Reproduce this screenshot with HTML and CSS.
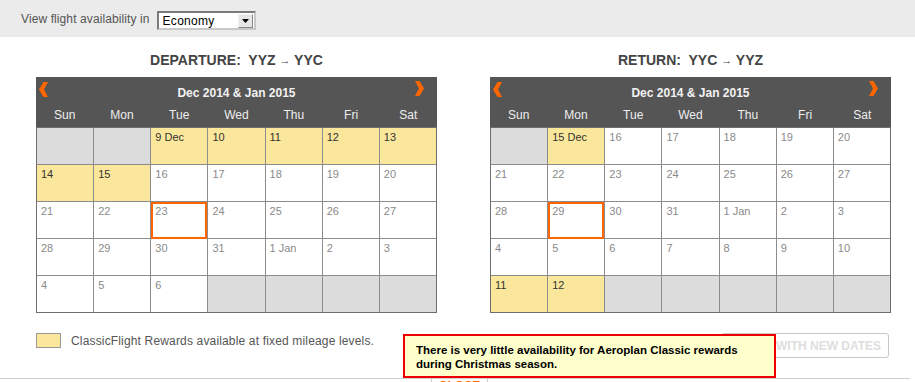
FILE: index.html
```html
<!DOCTYPE html>
<html lang="en">
<head>
    <meta charset="UTF-8">
    <title>Flight availability</title>
    <link rel="stylesheet" href="styles.css">
</head>
<body>
    <div class="toolbar">
        <span class="toolbar-label">View flight availability in</span>
        <div class="select">
            <span>Economy</span>
            <span class="select-btn"><svg width="7" height="4" viewBox="0 0 7 4"><polygon points="0,0 7,0 3.5,4" fill="#000"/></svg></span>
        </div>
    </div>

    <div class="calendars">
        <div class="cal-block">
            <h2>DEPARTURE:&nbsp; YYZ <span class="arr">&#8594;</span> YYC</h2>
            <div class="cal">
                <div class="cal-head">
                    <svg class="nav nav-prev" width="9" height="15" viewBox="0 0 9 15"><polygon points="9,0 5,7.5 9,15 4.5,15 0,7.5 4.5,0" fill="#ff6600"/></svg>
                    <svg class="nav nav-next" width="9" height="15" viewBox="0 0 9 15"><polygon points="0,0 4,7.5 0,15 4.5,15 9,7.5 4.5,0" fill="#ff6600"/></svg>
                    <div class="cal-title">Dec 2014 &amp; Jan 2015</div>
                    <div class="cal-days">
                        <span>Sun</span><span>Mon</span><span>Tue</span><span>Wed</span><span>Thu</span><span>Fri</span><span>Sat</span>
                    </div>
                </div>
                <div class="cal-grid">
                    <div class="day empty"></div>
                    <div class="day empty"></div>
                    <div class="day avail">9 Dec</div>
                    <div class="day avail">10</div>
                    <div class="day avail">11</div>
                    <div class="day avail">12</div>
                    <div class="day avail">13</div>

                    <div class="day avail">14</div>
                    <div class="day avail">15</div>
                    <div class="day">16</div>
                    <div class="day">17</div>
                    <div class="day">18</div>
                    <div class="day">19</div>
                    <div class="day">20</div>

                    <div class="day">21</div>
                    <div class="day">22</div>
                    <div class="day selected">23</div>
                    <div class="day">24</div>
                    <div class="day">25</div>
                    <div class="day">26</div>
                    <div class="day">27</div>

                    <div class="day">28</div>
                    <div class="day">29</div>
                    <div class="day">30</div>
                    <div class="day">31</div>
                    <div class="day">1 Jan</div>
                    <div class="day">2</div>
                    <div class="day">3</div>

                    <div class="day">4</div>
                    <div class="day">5</div>
                    <div class="day">6</div>
                    <div class="day empty"></div>
                    <div class="day empty"></div>
                    <div class="day empty"></div>
                    <div class="day empty"></div>
                </div>
            </div>
        </div>

        <div class="cal-block">
            <h2>RETURN:&nbsp; YYC <span class="arr">&#8594;</span> YYZ</h2>
            <div class="cal">
                <div class="cal-head">
                    <svg class="nav nav-prev" width="9" height="15" viewBox="0 0 9 15"><polygon points="9,0 5,7.5 9,15 4.5,15 0,7.5 4.5,0" fill="#ff6600"/></svg>
                    <svg class="nav nav-next" width="9" height="15" viewBox="0 0 9 15"><polygon points="0,0 4,7.5 0,15 4.5,15 9,7.5 4.5,0" fill="#ff6600"/></svg>
                    <div class="cal-title">Dec 2014 &amp; Jan 2015</div>
                    <div class="cal-days">
                        <span>Sun</span><span>Mon</span><span>Tue</span><span>Wed</span><span>Thu</span><span>Fri</span><span>Sat</span>
                    </div>
                </div>
                <div class="cal-grid">
                    <div class="day empty"></div>
                    <div class="day avail">15 Dec</div>
                    <div class="day">16</div>
                    <div class="day">17</div>
                    <div class="day">18</div>
                    <div class="day">19</div>
                    <div class="day">20</div>

                    <div class="day">21</div>
                    <div class="day">22</div>
                    <div class="day">23</div>
                    <div class="day">24</div>
                    <div class="day">25</div>
                    <div class="day">26</div>
                    <div class="day">27</div>

                    <div class="day">28</div>
                    <div class="day selected">29</div>
                    <div class="day">30</div>
                    <div class="day">31</div>
                    <div class="day">1 Jan</div>
                    <div class="day">2</div>
                    <div class="day">3</div>

                    <div class="day">4</div>
                    <div class="day">5</div>
                    <div class="day">6</div>
                    <div class="day">7</div>
                    <div class="day">8</div>
                    <div class="day">9</div>
                    <div class="day">10</div>

                    <div class="day avail">11</div>
                    <div class="day avail">12</div>
                    <div class="day empty"></div>
                    <div class="day empty"></div>
                    <div class="day empty"></div>
                    <div class="day empty"></div>
                    <div class="day empty"></div>
                </div>
            </div>
        </div>
    </div>

    <div class="footer">
        <div class="legend">
            <span class="legend-box"></span>
            <span class="legend-text">ClassicFlight Rewards available at fixed mileage levels.</span>
        </div>
        <button class="search-btn">SEARCH WITH NEW DATES</button>
    </div>

    <div class="bottom">
        <div class="close-tab">CLOSE</div>
    </div>

    <div class="tooltip">
        There is very little availability for Aeroplan Classic rewards<br>
        during Christmas season.
    </div>
</body>
</html>
```

FILE: styles.css
```css
body {
    margin: 0;
    font-family: "Liberation Sans", Arial, sans-serif;
    background-color: white;
    color: #555;
    width: 915px;
    height: 382px;
    overflow: hidden;
    position: relative;
}
.toolbar {
    background-color: #ebebeb;
    height: 37px;
    display: flex;
    align-items: center;
    padding-left: 21px;
    box-sizing: border-box;
    font-size: 12px;
}
.toolbar-label {
    margin-right: 7px;
    margin-top: 1px;
    letter-spacing: 0.1px;
}
.select {
    width: 99px;
    height: 19px;
    box-sizing: border-box;
    border: 2px solid #7a7a7a;
    border-right-color: #c8c8c8;
    border-bottom-color: #c8c8c8;
    background-color: white;
    display: flex;
    align-items: center;
    justify-content: space-between;
    padding-left: 4px;
    padding-right: 1px;
    color: #000;
    font-size: 12px;
    letter-spacing: 0.3px;
    margin-top: 4px;
}
.select-btn {
    width: 15px;
    height: 14px;
    background-color: #e6e6e6;
    border: 1px solid #f4f4f4;
    border-right-color: #888;
    border-bottom-color: #888;
    box-sizing: border-box;
    display: flex;
    align-items: center;
    justify-content: center;
}
.calendars {
    display: flex;
    gap: 53px;
    padding: 15px 0 0 36px;
}
.cal-block {
    width: 401px;
}
.cal-block h2 {
    margin: 0 0 9px;
    font-size: 14px;
    line-height: 16px;
    color: #444;
    text-align: center;
}
.arr {
    font-size: 11px;
    vertical-align: 1px;
}
.cal-head {
    background-color: #555;
    position: relative;
    color: #f2f2f2;
}
.nav {
    position: absolute;
    top: 5px;
}
.nav-prev {
    left: 3px;
}
.nav-next {
    right: 13px;
    top: 4px;
}
.cal-title {
    text-align: center;
    font-weight: bold;
    font-size: 12px;
    line-height: 16px;
    padding: 8px 0 3px;
}
.cal-days {
    display: grid;
    grid-template-columns: repeat(7, 1fr);
    font-size: 12px;
    line-height: 23px;
    text-align: center;
    color: #eee;
}
.cal-grid {
    display: grid;
    grid-template-columns: repeat(7, 1fr);
    gap: 1px;
    background-color: #8c8c8c;
    border: 1px solid #6e6e6e;
}
.day {
    height: 36px;
    background-color: white;
    font-size: 11px;
    line-height: 13px;
    padding: 3px 0 0 4px;
    box-sizing: border-box;
    color: #8a8a8a;
}
.day.avail {
    background-color: #fae79c;
    color: #333;
}
.day.empty {
    background-color: #dcdcdc;
}
.day.selected {
    position: relative;
}
.day.selected::after {
    content: "";
    position: absolute;
    inset: 0 0 -1px 0;
    border: 2px solid #ff6600;
}
.footer {
    display: flex;
    justify-content: space-between;
    align-items: flex-start;
    padding: 20px 26px 0 36px;
    height: 45px;
}
.legend {
    display: flex;
    align-items: center;
    gap: 10px;
    font-size: 12px;
}
.legend-text {
    letter-spacing: 0.16px;
}
.legend-box {
    width: 25px;
    height: 15px;
    box-sizing: border-box;
    background-color: #fae79c;
    border: 1px solid #999;
}
.search-btn {
    width: 168px;
    height: 25px;
    border: 1px solid #c8c8c8;
    border-radius: 3px;
    background-color: white;
    color: #dedede;
    font-family: "Liberation Sans", Arial, sans-serif;
    font-weight: bold;
    font-size: 12px;
    white-space: nowrap;
    overflow: hidden;
    text-align: right;
    padding: 0 8px 0 0;
}
.bottom {
    border-top: 1px solid #d0d0d0;
    margin-right: 5px;
    padding-left: 431px;
}
.close-tab {
    width: 57px;
    height: 20px;
    box-sizing: border-box;
    border-left: 1px solid #ccc;
    border-right: 1px solid #ccc;
    color: #ff6600;
    font-weight: bold;
    font-size: 12px;
    line-height: 12px;
    padding-top: 1px;
    text-align: center;
}
.tooltip {
    position: absolute;
    left: 403px;
    top: 334px;
    width: 373px;
    height: 44px;
    box-sizing: border-box;
    border: 2px solid #ee0000;
    background-color: #ffffcc;
    color: #000;
    font-weight: bold;
    font-size: 11.5px;
    line-height: 14px;
    padding: 7px 0 0 11px;
}
```
